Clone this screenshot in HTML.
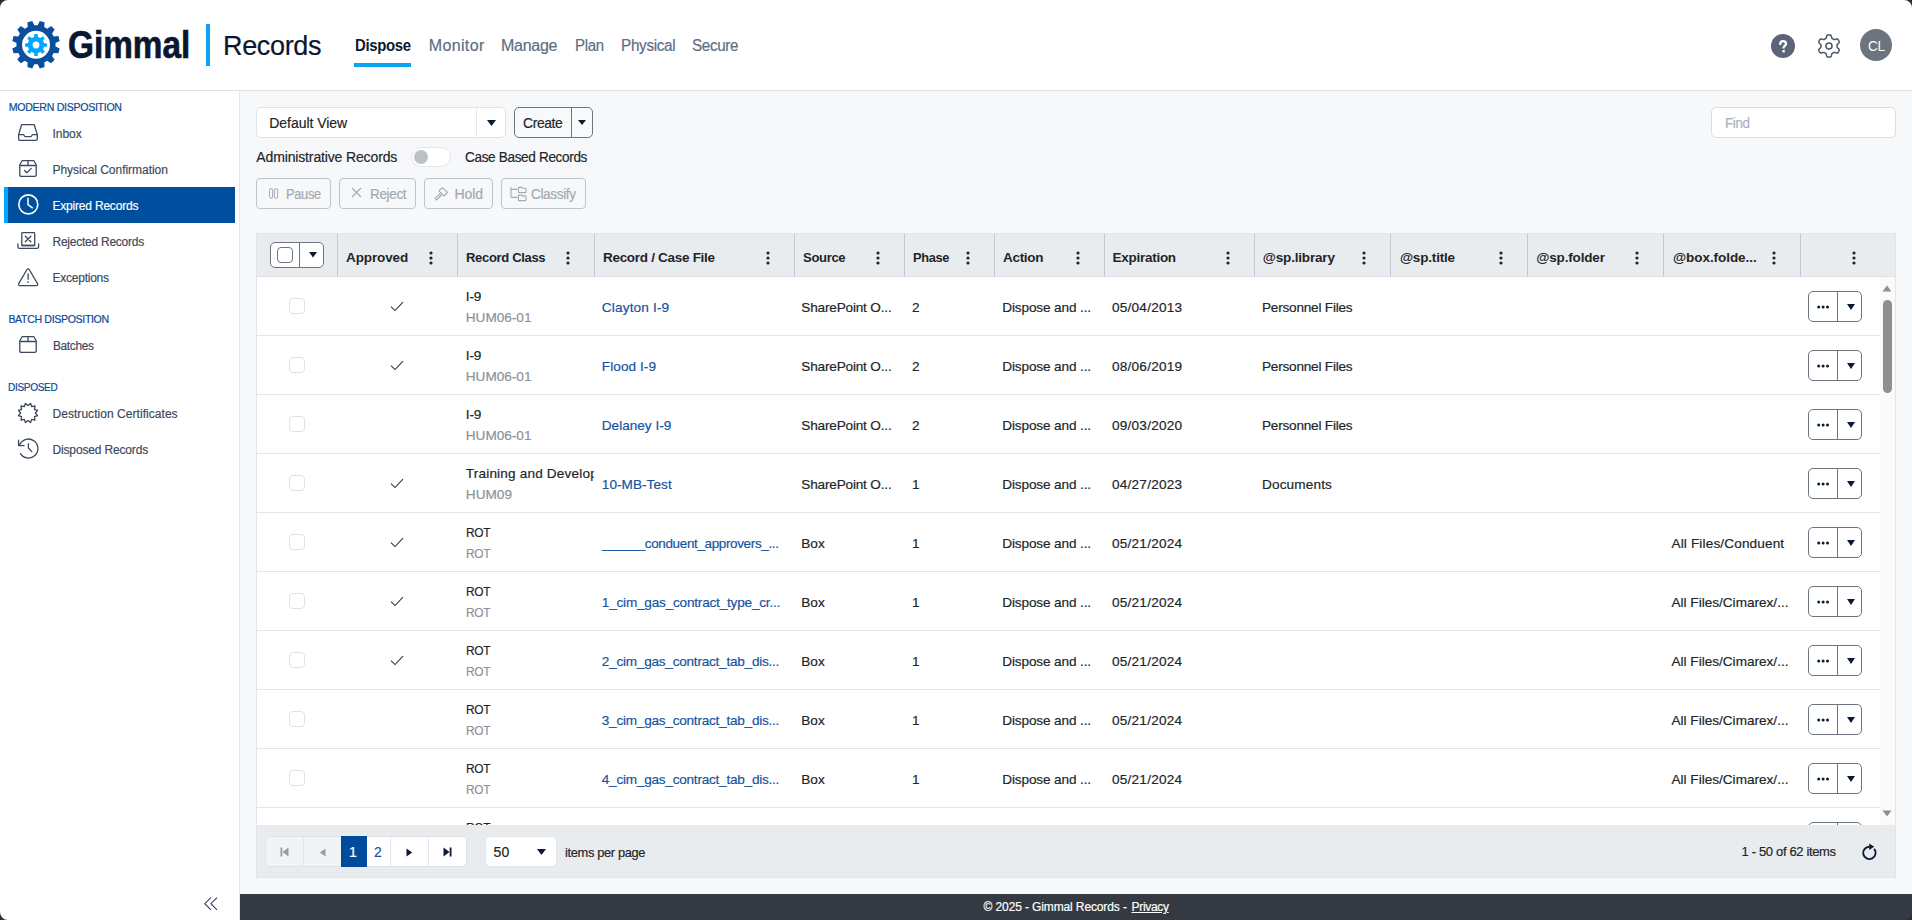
<!DOCTYPE html>
<html><head><meta charset="utf-8"><title>Gimmal Records - Expired Records</title>
<style>
*{box-sizing:border-box;margin:0;padding:0}
html,body{width:1912px;height:920px;overflow:hidden;background:#f7f8fa;font-family:"Liberation Sans",sans-serif;color:#212529}
.t{position:absolute;line-height:1;white-space:nowrap;-webkit-text-stroke:0.18px currentColor}
.b{position:absolute}
svg{position:absolute;overflow:visible}
</style></head><body>

<div class="b" style="left:0px;top:0px;width:1912px;height:90px;background:#fff"></div>
<div class="b" style="left:0px;top:90px;width:1912px;height:1px;background:#dde2e8"></div>
<div class="b" style="left:0px;top:91px;width:239px;height:829px;background:#fff"></div>
<div class="b" style="left:239px;top:91px;width:1px;height:829px;background:#e3e7ec"></div>
<div class="b" style="left:240px;top:894px;width:1672px;height:26px;background:#353a42"></div>
<svg style="left:0;top:0" width="80" height="80" viewBox="0 0 80 80"><path d="M37.71 25.17 L39.75 21.00 L44.60 22.29 L44.28 26.94 L47.24 28.64 L51.10 26.05 L54.65 29.60 L52.06 33.46 L53.76 36.42 L58.41 36.10 L59.70 40.95 L55.53 42.99 L55.53 46.41 L59.70 48.45 L58.41 53.30 L53.76 52.98 L52.06 55.94 L54.65 59.80 L51.10 63.35 L47.24 60.76 L44.28 62.46 L44.60 67.11 L39.75 68.40 L37.71 64.23 L34.29 64.23 L32.25 68.40 L27.40 67.11 L27.72 62.46 L24.76 60.76 L20.90 63.35 L17.35 59.80 L19.94 55.94 L18.24 52.98 L13.59 53.30 L12.30 48.45 L16.47 46.41 L16.47 42.99 L12.30 40.95 L13.59 36.10 L18.24 36.42 L19.94 33.46 L17.35 29.60 L20.90 26.05 L24.76 28.64 L27.72 26.94 L27.40 22.29 L32.25 21.00 L34.29 25.17 Z" fill="#0a4f9f"/><circle cx="36" cy="44.8" r="14" fill="#fff"/><path d="M34.13 36.91 L34.37 34.12 L37.63 34.12 L37.87 36.91 L40.40 37.96 L42.54 36.16 L44.84 38.46 L43.04 40.60 L44.09 43.13 L46.88 43.37 L46.88 46.63 L44.09 46.87 L43.04 49.40 L44.84 51.54 L42.54 53.84 L40.40 52.04 L37.87 53.09 L37.63 55.88 L34.37 55.88 L34.13 53.09 L31.60 52.04 L29.46 53.84 L27.16 51.54 L28.96 49.40 L27.91 46.87 L25.12 46.63 L25.12 43.37 L27.91 43.13 L28.96 40.60 L27.16 38.46 L29.46 36.16 L31.60 37.96 Z" fill="#00a8ff"/><circle cx="36" cy="45" r="3.4" fill="#fff"/></svg>
<div class="t" style="left:67.80px;top:26.11px;font-size:38.50px;color:#0b1631;font-weight:bold;-webkit-text-stroke:0;-webkit-text-stroke:0.7px #0b1631;transform:scaleX(0.8653);transform-origin:0 0">Gimmal</div>
<div class="b" style="left:206px;top:24px;width:4px;height:42px;background:#0aa5f2"></div>
<div class="t" style="left:223.40px;top:32.42px;font-size:27.50px;color:#0b1631;letter-spacing:-0.350px;transform:scaleX(0.9820);transform-origin:0 0;">Records</div>
<div class="t" style="left:355.00px;top:38.06px;font-size:16.00px;color:#0b1a33;font-weight:bold;-webkit-text-stroke:0;letter-spacing:-0.350px;transform:scaleX(0.9328);transform-origin:0 0;">Dispose</div>
<div class="t" style="left:428.70px;top:38.06px;font-size:16.00px;color:#5d6d84;letter-spacing:0.375px;">Monitor</div>
<div class="t" style="left:501.00px;top:38.06px;font-size:16.00px;color:#5d6d84;letter-spacing:-0.264px;">Manage</div>
<div class="t" style="left:574.60px;top:38.06px;font-size:16.00px;color:#5d6d84;letter-spacing:-0.350px;transform:scaleX(0.9363);transform-origin:0 0;">Plan</div>
<div class="t" style="left:620.80px;top:38.06px;font-size:16.00px;color:#5d6d84;letter-spacing:-0.350px;transform:scaleX(0.9575);transform-origin:0 0;">Physical</div>
<div class="t" style="left:692.20px;top:38.06px;font-size:16.00px;color:#5d6d84;letter-spacing:-0.350px;transform:scaleX(0.9500);transform-origin:0 0;">Secure</div>
<div class="b" style="left:354px;top:63px;width:57px;height:4px;background:#0aa5f2"></div>
<svg style="left:1771px;top:34px" width="24" height="24" viewBox="0 0 24 24"><circle cx="12" cy="12" r="12" fill="#5a6577"/><path d="M9.2 10a2.9 2.9 0 0 1 5.8 0c0 1.9-2.4 2-2.4 3.5" fill="none" stroke="#fff" stroke-width="2.2" stroke-linecap="square"/><rect x="11.4" y="16" width="2.4" height="2.4" fill="#fff"/></svg>
<svg style="left:1817.9px;top:34px" width="22" height="24" viewBox="0 0 22 24"><path d="M11.00 0.90 L11.10 0.90 L11.19 0.90 L11.29 0.90 L11.39 0.91 L11.48 0.91 L11.58 0.92 L11.68 0.92 L11.77 0.93 L11.87 0.93 L11.97 0.94 L12.06 0.95 L12.16 0.96 L12.26 0.97 L12.35 0.98 L12.45 1.01 L12.54 1.04 L12.63 1.08 L12.72 1.14 L12.81 1.21 L12.89 1.30 L12.97 1.40 L13.04 1.51 L13.11 1.63 L13.18 1.76 L13.24 1.91 L13.29 2.06 L13.35 2.22 L13.40 2.39 L13.44 2.56 L13.48 2.73 L13.52 2.90 L13.56 3.07 L13.60 3.23 L13.63 3.39 L13.67 3.55 L13.70 3.69 L13.73 3.83 L13.77 3.95 L13.81 4.07 L13.85 4.17 L13.89 4.26 L13.94 4.34 L13.99 4.41 L14.05 4.46 L14.10 4.51 L14.17 4.54 L14.23 4.57 L14.29 4.60 L14.36 4.63 L14.42 4.66 L14.49 4.69 L14.55 4.72 L14.61 4.75 L14.68 4.78 L14.74 4.82 L14.80 4.85 L14.86 4.88 L14.93 4.92 L14.99 4.95 L15.05 4.99 L15.11 5.02 L15.17 5.06 L15.23 5.09 L15.29 5.13 L15.35 5.17 L15.41 5.21 L15.47 5.25 L15.53 5.28 L15.59 5.32 L15.65 5.36 L15.70 5.41 L15.76 5.45 L15.82 5.49 L15.88 5.53 L15.94 5.57 L16.01 5.59 L16.08 5.61 L16.16 5.62 L16.26 5.62 L16.36 5.62 L16.47 5.60 L16.58 5.58 L16.71 5.55 L16.85 5.51 L16.99 5.47 L17.14 5.42 L17.29 5.37 L17.46 5.32 L17.62 5.26 L17.79 5.21 L17.96 5.16 L18.13 5.12 L18.29 5.08 L18.46 5.04 L18.62 5.02 L18.78 5.00 L18.93 4.99 L19.07 4.99 L19.20 5.00 L19.32 5.02 L19.44 5.04 L19.54 5.08 L19.64 5.13 L19.72 5.19 L19.80 5.25 L19.86 5.32 L19.92 5.40 L19.98 5.48 L20.04 5.55 L20.09 5.63 L20.15 5.71 L20.20 5.79 L20.26 5.87 L20.31 5.95 L20.36 6.04 L20.41 6.12 L20.46 6.20 L20.51 6.28 L20.56 6.37 L20.61 6.45 L20.66 6.53 L20.71 6.62 L20.75 6.70 L20.80 6.79 L20.85 6.87 L20.89 6.96 L20.93 7.05 L20.98 7.13 L21.02 7.22 L21.06 7.31 L21.10 7.40 L21.14 7.49 L21.18 7.57 L21.22 7.66 L21.25 7.76 L21.26 7.85 L21.27 7.95 L21.26 8.06 L21.24 8.17 L21.21 8.28 L21.17 8.40 L21.11 8.52 L21.04 8.64 L20.95 8.77 L20.86 8.89 L20.75 9.02 L20.64 9.14 L20.52 9.27 L20.40 9.39 L20.27 9.52 L20.14 9.64 L20.02 9.75 L19.89 9.87 L19.77 9.98 L19.65 10.08 L19.54 10.18 L19.44 10.28 L19.35 10.38 L19.27 10.47 L19.21 10.55 L19.15 10.64 L19.11 10.72 L19.07 10.79 L19.05 10.87 L19.04 10.94 L19.04 11.01 L19.05 11.08 L19.06 11.15 L19.06 11.22 L19.07 11.29 L19.08 11.36 L19.08 11.43 L19.08 11.51 L19.09 11.58 L19.09 11.65 L19.10 11.72 L19.10 11.79 L19.10 11.86 L19.10 11.93 L19.10 12.00 L19.10 12.07 L19.10 12.14 L19.10 12.21 L19.10 12.28 L19.09 12.35 L19.09 12.42 L19.08 12.49 L19.08 12.57 L19.08 12.64 L19.07 12.71 L19.06 12.78 L19.06 12.85 L19.05 12.92 L19.04 12.99 L19.04 13.06 L19.05 13.13 L19.07 13.21 L19.11 13.28 L19.15 13.36 L19.21 13.45 L19.27 13.53 L19.35 13.62 L19.44 13.72 L19.54 13.82 L19.65 13.92 L19.77 14.02 L19.89 14.13 L20.02 14.25 L20.14 14.36 L20.27 14.48 L20.40 14.61 L20.52 14.73 L20.64 14.86 L20.75 14.98 L20.86 15.11 L20.95 15.23 L21.04 15.36 L21.11 15.48 L21.17 15.60 L21.21 15.72 L21.24 15.83 L21.26 15.94 L21.27 16.05 L21.26 16.15 L21.25 16.24 L21.22 16.34 L21.18 16.43 L21.14 16.51 L21.10 16.60 L21.06 16.69 L21.02 16.78 L20.98 16.87 L20.93 16.95 L20.89 17.04 L20.85 17.13 L20.80 17.21 L20.75 17.30 L20.71 17.38 L20.66 17.47 L20.61 17.55 L20.56 17.63 L20.51 17.72 L20.46 17.80 L20.41 17.88 L20.36 17.96 L20.31 18.05 L20.26 18.13 L20.20 18.21 L20.15 18.29 L20.09 18.37 L20.04 18.45 L19.98 18.52 L19.92 18.60 L19.86 18.68 L19.80 18.75 L19.72 18.81 L19.64 18.87 L19.54 18.92 L19.44 18.96 L19.32 18.98 L19.20 19.00 L19.07 19.01 L18.93 19.01 L18.78 19.00 L18.62 18.98 L18.46 18.96 L18.29 18.92 L18.13 18.88 L17.96 18.84 L17.79 18.79 L17.62 18.74 L17.46 18.68 L17.29 18.63 L17.14 18.58 L16.99 18.53 L16.85 18.49 L16.71 18.45 L16.58 18.42 L16.47 18.40 L16.36 18.38 L16.26 18.38 L16.16 18.38 L16.08 18.39 L16.01 18.41 L15.94 18.43 L15.88 18.47 L15.82 18.51 L15.76 18.55 L15.70 18.59 L15.65 18.64 L15.59 18.68 L15.53 18.72 L15.47 18.75 L15.41 18.79 L15.35 18.83 L15.29 18.87 L15.23 18.91 L15.17 18.94 L15.11 18.98 L15.05 19.01 L14.99 19.05 L14.93 19.08 L14.86 19.12 L14.80 19.15 L14.74 19.18 L14.68 19.22 L14.61 19.25 L14.55 19.28 L14.49 19.31 L14.42 19.34 L14.36 19.37 L14.29 19.40 L14.23 19.43 L14.17 19.46 L14.10 19.49 L14.05 19.54 L13.99 19.59 L13.94 19.66 L13.89 19.74 L13.85 19.83 L13.81 19.93 L13.77 20.05 L13.73 20.17 L13.70 20.31 L13.67 20.45 L13.63 20.61 L13.60 20.77 L13.56 20.93 L13.52 21.10 L13.48 21.27 L13.44 21.44 L13.40 21.61 L13.35 21.78 L13.29 21.94 L13.24 22.09 L13.18 22.24 L13.11 22.37 L13.04 22.49 L12.97 22.60 L12.89 22.70 L12.81 22.79 L12.72 22.86 L12.63 22.92 L12.54 22.96 L12.45 22.99 L12.35 23.02 L12.26 23.03 L12.16 23.04 L12.06 23.05 L11.97 23.06 L11.87 23.07 L11.77 23.07 L11.68 23.08 L11.58 23.08 L11.48 23.09 L11.39 23.09 L11.29 23.10 L11.19 23.10 L11.10 23.10 L11.00 23.10 L10.90 23.10 L10.81 23.10 L10.71 23.10 L10.61 23.09 L10.52 23.09 L10.42 23.08 L10.32 23.08 L10.23 23.07 L10.13 23.07 L10.03 23.06 L9.94 23.05 L9.84 23.04 L9.74 23.03 L9.65 23.02 L9.55 22.99 L9.46 22.96 L9.37 22.92 L9.28 22.86 L9.19 22.79 L9.11 22.70 L9.03 22.60 L8.96 22.49 L8.89 22.37 L8.82 22.24 L8.76 22.09 L8.71 21.94 L8.65 21.78 L8.60 21.61 L8.56 21.44 L8.52 21.27 L8.48 21.10 L8.44 20.93 L8.40 20.77 L8.37 20.61 L8.33 20.45 L8.30 20.31 L8.27 20.17 L8.23 20.05 L8.19 19.93 L8.15 19.83 L8.11 19.74 L8.06 19.66 L8.01 19.59 L7.95 19.54 L7.90 19.49 L7.83 19.46 L7.77 19.43 L7.71 19.40 L7.64 19.37 L7.58 19.34 L7.51 19.31 L7.45 19.28 L7.39 19.25 L7.32 19.22 L7.26 19.18 L7.20 19.15 L7.14 19.12 L7.07 19.08 L7.01 19.05 L6.95 19.01 L6.89 18.98 L6.83 18.94 L6.77 18.91 L6.71 18.87 L6.65 18.83 L6.59 18.79 L6.53 18.75 L6.47 18.72 L6.41 18.68 L6.35 18.64 L6.30 18.59 L6.24 18.55 L6.18 18.51 L6.12 18.47 L6.06 18.43 L5.99 18.41 L5.92 18.39 L5.84 18.38 L5.74 18.38 L5.64 18.38 L5.53 18.40 L5.42 18.42 L5.29 18.45 L5.15 18.49 L5.01 18.53 L4.86 18.58 L4.71 18.63 L4.54 18.68 L4.38 18.74 L4.21 18.79 L4.04 18.84 L3.87 18.88 L3.71 18.92 L3.54 18.96 L3.38 18.98 L3.22 19.00 L3.07 19.01 L2.93 19.01 L2.80 19.00 L2.68 18.98 L2.56 18.96 L2.46 18.92 L2.36 18.87 L2.28 18.81 L2.20 18.75 L2.14 18.68 L2.08 18.60 L2.02 18.52 L1.96 18.45 L1.91 18.37 L1.85 18.29 L1.80 18.21 L1.74 18.13 L1.69 18.05 L1.64 17.96 L1.59 17.88 L1.54 17.80 L1.49 17.72 L1.44 17.63 L1.39 17.55 L1.34 17.47 L1.29 17.38 L1.25 17.30 L1.20 17.21 L1.15 17.13 L1.11 17.04 L1.07 16.95 L1.02 16.87 L0.98 16.78 L0.94 16.69 L0.90 16.60 L0.86 16.51 L0.82 16.43 L0.78 16.34 L0.75 16.24 L0.74 16.15 L0.73 16.05 L0.74 15.94 L0.76 15.83 L0.79 15.72 L0.83 15.60 L0.89 15.48 L0.96 15.36 L1.05 15.23 L1.14 15.11 L1.25 14.98 L1.36 14.86 L1.48 14.73 L1.60 14.61 L1.73 14.48 L1.86 14.36 L1.98 14.25 L2.11 14.13 L2.23 14.02 L2.35 13.92 L2.46 13.82 L2.56 13.72 L2.65 13.62 L2.73 13.53 L2.79 13.45 L2.85 13.36 L2.89 13.28 L2.93 13.21 L2.95 13.13 L2.96 13.06 L2.96 12.99 L2.95 12.92 L2.94 12.85 L2.94 12.78 L2.93 12.71 L2.92 12.64 L2.92 12.57 L2.92 12.49 L2.91 12.42 L2.91 12.35 L2.90 12.28 L2.90 12.21 L2.90 12.14 L2.90 12.07 L2.90 12.00 L2.90 11.93 L2.90 11.86 L2.90 11.79 L2.90 11.72 L2.91 11.65 L2.91 11.58 L2.92 11.51 L2.92 11.43 L2.92 11.36 L2.93 11.29 L2.94 11.22 L2.94 11.15 L2.95 11.08 L2.96 11.01 L2.96 10.94 L2.95 10.87 L2.93 10.79 L2.89 10.72 L2.85 10.64 L2.79 10.55 L2.73 10.47 L2.65 10.38 L2.56 10.28 L2.46 10.18 L2.35 10.08 L2.23 9.98 L2.11 9.87 L1.98 9.75 L1.86 9.64 L1.73 9.52 L1.60 9.39 L1.48 9.27 L1.36 9.14 L1.25 9.02 L1.14 8.89 L1.05 8.77 L0.96 8.64 L0.89 8.52 L0.83 8.40 L0.79 8.28 L0.76 8.17 L0.74 8.06 L0.73 7.95 L0.74 7.85 L0.75 7.76 L0.78 7.66 L0.82 7.57 L0.86 7.49 L0.90 7.40 L0.94 7.31 L0.98 7.22 L1.02 7.13 L1.07 7.05 L1.11 6.96 L1.15 6.87 L1.20 6.79 L1.25 6.70 L1.29 6.62 L1.34 6.53 L1.39 6.45 L1.44 6.37 L1.49 6.28 L1.54 6.20 L1.59 6.12 L1.64 6.04 L1.69 5.95 L1.74 5.87 L1.80 5.79 L1.85 5.71 L1.91 5.63 L1.96 5.55 L2.02 5.48 L2.08 5.40 L2.14 5.32 L2.20 5.25 L2.28 5.19 L2.36 5.13 L2.46 5.08 L2.56 5.04 L2.68 5.02 L2.80 5.00 L2.93 4.99 L3.07 4.99 L3.22 5.00 L3.38 5.02 L3.54 5.04 L3.71 5.08 L3.87 5.12 L4.04 5.16 L4.21 5.21 L4.38 5.26 L4.54 5.32 L4.71 5.37 L4.86 5.42 L5.01 5.47 L5.15 5.51 L5.29 5.55 L5.42 5.58 L5.53 5.60 L5.64 5.62 L5.74 5.62 L5.84 5.62 L5.92 5.61 L5.99 5.59 L6.06 5.57 L6.12 5.53 L6.18 5.49 L6.24 5.45 L6.30 5.41 L6.35 5.36 L6.41 5.32 L6.47 5.28 L6.53 5.25 L6.59 5.21 L6.65 5.17 L6.71 5.13 L6.77 5.09 L6.83 5.06 L6.89 5.02 L6.95 4.99 L7.01 4.95 L7.07 4.92 L7.14 4.88 L7.20 4.85 L7.26 4.82 L7.32 4.78 L7.39 4.75 L7.45 4.72 L7.51 4.69 L7.58 4.66 L7.64 4.63 L7.71 4.60 L7.77 4.57 L7.83 4.54 L7.90 4.51 L7.95 4.46 L8.01 4.41 L8.06 4.34 L8.11 4.26 L8.15 4.17 L8.19 4.07 L8.23 3.95 L8.27 3.83 L8.30 3.69 L8.33 3.55 L8.37 3.39 L8.40 3.23 L8.44 3.07 L8.48 2.90 L8.52 2.73 L8.56 2.56 L8.60 2.39 L8.65 2.22 L8.71 2.06 L8.76 1.91 L8.82 1.76 L8.89 1.63 L8.96 1.51 L9.03 1.40 L9.11 1.30 L9.19 1.21 L9.28 1.14 L9.37 1.08 L9.46 1.04 L9.55 1.01 L9.65 0.98 L9.74 0.97 L9.84 0.96 L9.94 0.95 L10.03 0.94 L10.13 0.93 L10.23 0.93 L10.32 0.92 L10.42 0.92 L10.52 0.91 L10.61 0.91 L10.71 0.90 L10.81 0.90 L10.90 0.90Z" fill="none" stroke="#4a5568" stroke-width="1.5" stroke-linejoin="round"/><circle cx="11" cy="12" r="3.05" fill="none" stroke="#4a5568" stroke-width="1.5"/></svg>
<div class="b" style="left:1860px;top:29px;width:32px;height:32px;background:#6c757e;border-radius:50%"></div>
<div class="t" style="left:1867.80px;top:38.20px;font-size:15.00px;color:#fff;letter-spacing:-0.350px;transform:scaleX(0.9084);transform-origin:0 0;-webkit-text-stroke:0">CL</div>
<div class="t" style="left:8.70px;top:101.83px;font-size:10.60px;color:#0b4896;letter-spacing:-0.293px;">MODERN DISPOSITION</div>
<div class="t" style="left:8.40px;top:313.93px;font-size:10.60px;color:#0b4896;letter-spacing:-0.350px;">BATCH DISPOSITION</div>
<div class="t" style="left:8.40px;top:381.73px;font-size:10.60px;color:#0b4896;letter-spacing:-0.350px;transform:scaleX(0.9497);transform-origin:0 0;">DISPOSED</div>
<div class="b" style="left:4px;top:187px;width:231px;height:36px;background:#004e9e"></div>
<div class="b" style="left:4px;top:187px;width:4px;height:36px;background:#00a6ff"></div>
<div class="t" style="left:52.50px;top:127.54px;font-size:12.00px;color:#3d4a5d;letter-spacing:-0.039px;">Inbox</div>
<div class="t" style="left:52.50px;top:163.54px;font-size:12.00px;color:#3d4a5d;letter-spacing:-0.032px;">Physical Confirmation</div>
<div class="t" style="left:52.50px;top:199.54px;font-size:12.00px;color:#fff;letter-spacing:-0.200px;">Expired Records</div>
<div class="t" style="left:52.50px;top:235.64px;font-size:12.00px;color:#3d4a5d;letter-spacing:-0.245px;">Rejected Records</div>
<div class="t" style="left:52.50px;top:272.04px;font-size:12.00px;color:#3d4a5d;letter-spacing:-0.244px;">Exceptions</div>
<div class="t" style="left:52.50px;top:339.54px;font-size:12.00px;color:#3d4a5d;letter-spacing:-0.350px;transform:scaleX(0.9913);transform-origin:0 0;">Batches</div>
<div class="t" style="left:52.50px;top:408.04px;font-size:12.00px;color:#3d4a5d;letter-spacing:0.046px;">Destruction Certificates</div>
<div class="t" style="left:52.50px;top:443.84px;font-size:12.00px;color:#3d4a5d;letter-spacing:-0.156px;">Disposed Records</div>
<svg style="left:18px;top:124px" width="20" height="17" viewBox="0 0 20 17"><path d="M3.6 0.7h12.6l3.1 9.9v4.4a1.4 1.4 0 0 1-1.4 1.4H2a1.4 1.4 0 0 1-1.4-1.4V10.6z M0.6 10.6H5q0.8 0 1.1 0.7l0.4 0.7q0.3 0.6 1 0.6h5q0.7 0 1-0.6l0.4-0.7q0.3-0.7 1.1-0.7H19.3" fill="none" stroke="#3d4a5d" stroke-width="1.3" stroke-linecap="round" stroke-linejoin="round"/></svg>
<svg style="left:19px;top:160px" width="18" height="17" viewBox="0 0 18 17"><path d="M3 0.7h12l2.2 4v10.3a1.3 1.3 0 0 1-1.3 1.3H2.1A1.3 1.3 0 0 1 0.8 15V4.7z M0.8 5.5h16.4 M9 0.7v4.8 M5.5 10.5l2.3 2.2 4.5-4.3" fill="none" stroke="#3d4a5d" stroke-width="1.3" stroke-linecap="round" stroke-linejoin="round"/></svg>
<svg style="left:18px;top:194px" width="21" height="21" viewBox="0 0 21 21"><circle cx="10.3" cy="10.4" r="9.5" fill="none" stroke="#fff" stroke-width="1.6"/><path d="M10 4.2v6.4l4.4 3.2" fill="none" stroke="#fff" stroke-width="1.5" stroke-linecap="round"/></svg>
<svg style="left:17px;top:232px" width="23" height="18" viewBox="0 0 23 18"><path d="M4.8 13.4V1.4a0.7 0.7 0 0 1 0.7-0.7h11.5a0.7 0.7 0 0 1 0.7 0.7v12 M8.3 4.2l5.6 5.6 M13.9 4.2l-5.6 5.6 M0.9 11.9v2.9a1.6 1.6 0 0 0 1.6 1.6h17.5a1.6 1.6 0 0 0 1.6-1.6v-2.9" fill="none" stroke="#3d4a5d" stroke-width="1.3" stroke-linecap="round" stroke-linejoin="round"/><path d="M4.8 13.5h12.9" stroke="#3d4a5d" stroke-width="1.8"/></svg>
<svg style="left:17.8px;top:267.5px" width="21" height="18" viewBox="0 0 21 18"><path d="M9 1.5a1.3 1.3 0 0 1 2.2 0l8.3 14.2a1.3 1.3 0 0 1-1.1 2H1.8a1.3 1.3 0 0 1-1.1-2z M10.1 6v5.3" fill="none" stroke="#3d4a5d" stroke-width="1.3" stroke-linecap="round" stroke-linejoin="round"/><circle cx="10.1" cy="14" r="0.85" fill="#3d4a5d"/></svg>
<svg style="left:19px;top:336px" width="18" height="17" viewBox="0 0 18 17"><path d="M3 0.7h12l2.2 4v10.3a1.3 1.3 0 0 1-1.3 1.3H2.1A1.3 1.3 0 0 1 0.8 15V4.7z M0.8 5.5h16.4 M9 0.7v4.8" fill="none" stroke="#3d4a5d" stroke-width="1.3" stroke-linecap="round" stroke-linejoin="round"/></svg>
<svg style="left:18px;top:402.5px" width="20" height="20" viewBox="0 0 20 20"><path d="M12.56 0.44 L13.70 3.59 L17.00 3.00 L16.41 6.30 L19.56 7.44 L17.40 10.00 L19.56 12.56 L16.41 13.70 L17.00 17.00 L13.70 16.41 L12.56 19.56 L10.00 17.40 L7.44 19.56 L6.30 16.41 L3.00 17.00 L3.59 13.70 L0.44 12.56 L2.60 10.00 L0.44 7.44 L3.59 6.30 L3.00 3.00 L6.30 3.59 L7.44 0.44 L10.00 2.60Z" fill="none" stroke="#3d4a5d" stroke-width="1.3" stroke-linecap="round" stroke-linejoin="round"/></svg>
<svg style="left:18px;top:439px" width="22" height="21" viewBox="0 0 22 21"><path d="M1.9 5.4A9.5 9.5 0 1 1 2.4 14.6 M0.6 1.2v5.5h5.5 M10.4 4.7v4.3l3.4 3.6" fill="none" stroke="#3d4a5d" stroke-width="1.3" stroke-linecap="round" stroke-linejoin="round"/></svg>
<svg style="left:204px;top:897px" width="14" height="14" viewBox="0 0 14 14"><path d="M6.9 0.6L0.8 6.7l6.1 6.1 M13 0.6L6.9 6.7l6.1 6.1" fill="none" stroke="#33395a" stroke-width="1.05"/></svg>
<div class="b" style="left:256px;top:107px;width:250px;height:31px;background:#fff;border:1px solid #dfe3e8;border-radius:5px"></div>
<div class="b" style="left:476px;top:108px;width:1px;height:29px;background:#e6e9ed"></div>
<svg style="left:487px;top:120px" width="9" height="6" viewBox="0 0 9 6"><path d="M0 0h9L4.5 6z" fill="#0b1a33"/></svg>
<div class="t" style="left:269.30px;top:116.15px;font-size:14.00px;color:#212529;letter-spacing:-0.049px;">Default View</div>
<div class="b" style="left:514px;top:107px;width:79px;height:31px;background:#f8f9fa;border:1px solid #6c757d;border-radius:5px"></div>
<div class="b" style="left:571px;top:108px;width:1px;height:29px;background:#6c757d"></div>
<svg style="left:577.5px;top:119.5px" width="8" height="5" viewBox="0 0 8 5"><path d="M0 0h8L4 5z" fill="#0b1a33"/></svg>
<div class="t" style="left:523.00px;top:116.15px;font-size:14.00px;color:#212529;letter-spacing:-0.350px;transform:scaleX(0.9883);transform-origin:0 0;">Create</div>
<div class="t" style="left:256.30px;top:149.85px;font-size:14.00px;color:#212529;letter-spacing:-0.140px;">Administrative Records</div>
<div class="t" style="left:464.90px;top:149.85px;font-size:14.00px;color:#212529;letter-spacing:-0.350px;transform:scaleX(0.9688);transform-origin:0 0;">Case Based Records</div>
<div class="b" style="left:411px;top:147px;width:40px;height:20px;background:#fff;border:1px solid #e3e6ea;border-radius:10px"></div>
<div class="b" style="left:414px;top:150px;width:14px;height:14px;background:#bcc0c7;border-radius:50%"></div>
<div class="b" style="left:256px;top:178px;width:75px;height:31px;border:1px solid #bfc4ca;border-radius:4px"></div>
<div class="b" style="left:339px;top:178px;width:77px;height:31px;border:1px solid #bfc4ca;border-radius:4px"></div>
<div class="b" style="left:424px;top:178px;width:69px;height:31px;border:1px solid #bfc4ca;border-radius:4px"></div>
<div class="b" style="left:501px;top:178px;width:85px;height:31px;border:1px solid #bfc4ca;border-radius:4px"></div>
<svg style="left:268px;top:186px" width="12" height="15" viewBox="0 0 12 15"><rect x="1.6" y="2.6" width="3" height="9.7" rx="1.5" fill="none" stroke="#a2a9b0" stroke-width="1"/><rect x="6.4" y="2.6" width="3.3" height="9.7" rx="1.6" fill="none" stroke="#a2a9b0" stroke-width="1"/></svg>
<div class="t" style="left:286.40px;top:187.15px;font-size:14.00px;color:#a2a9b0;letter-spacing:-0.350px;transform:scaleX(0.9191);transform-origin:0 0;">Pause</div>
<svg style="left:351px;top:187px" width="11" height="11" viewBox="0 0 11 11"><path d="M1 1l9 9M10 1l-9 9" fill="none" stroke="#a2a9b0" stroke-width="1.2"/></svg>
<div class="t" style="left:369.70px;top:187.15px;font-size:14.00px;color:#a2a9b0;letter-spacing:-0.350px;transform:scaleX(0.9649);transform-origin:0 0;">Reject</div>
<svg style="left:434px;top:186px" width="16" height="16" viewBox="0 0 16 16"><path d="M8.3 1.6L13.5 6.4 10 10 4.9 4.9z M7 9.5L5.5 8.1 1 12.4 2.6 14z" fill="none" stroke="#a2a9b0" stroke-width="1.1" stroke-linejoin="round"/></svg>
<div class="t" style="left:454.40px;top:187.15px;font-size:14.00px;color:#a2a9b0;letter-spacing:-0.031px;">Hold</div>
<svg style="left:510px;top:186px" width="17" height="16" viewBox="0 0 17 16"><path d="M1 1v9.6a0.8 0.8 0 0 0 0.8 0.8H7.3 M1 3.4h6.3" fill="none" stroke="#a2a9b0" stroke-width="1.1"/><path d="M9 1.4h2.6l0.8 0.8h3a0.6 0.6 0 0 1 0.6 0.6v3.2a0.6 0.6 0 0 1-0.6 0.6H9a0.6 0.6 0 0 1-0.6-0.6V2a0.6 0.6 0 0 1 0.6-0.6z M9 9.1h2.6l0.8 0.8h3a0.6 0.6 0 0 1 0.6 0.6v3.5a0.6 0.6 0 0 1-0.6 0.6H9a0.6 0.6 0 0 1-0.6-0.6V9.7a0.6 0.6 0 0 1 0.6-0.6z" fill="none" stroke="#a2a9b0" stroke-width="1.1"/></svg>
<div class="t" style="left:531.40px;top:187.15px;font-size:14.00px;color:#a2a9b0;letter-spacing:-0.350px;transform:scaleX(0.9666);transform-origin:0 0;">Classify</div>
<div class="b" style="left:1711px;top:107px;width:185px;height:31px;background:#fff;border:1px solid #dadfe5;border-radius:5px"></div>
<div class="t" style="left:1724.50px;top:116.35px;font-size:14.00px;color:#a9b1bb;letter-spacing:-0.350px;transform:scaleX(0.9548);transform-origin:0 0;">Find</div>
<div class="b" style="left:256px;top:233px;width:1640px;height:593px;background:#fff;border:1px solid #e1e5ea"></div>
<div class="b" style="left:257px;top:234px;width:1638px;height:43px;background:#e9ecef"></div>
<div class="b" style="left:257px;top:276px;width:1638px;height:1px;background:#dee2e6"></div>
<div class="b" style="left:337px;top:234px;width:1px;height:43px;background:#c3c9d0"></div>
<div class="b" style="left:457px;top:234px;width:1px;height:43px;background:#c3c9d0"></div>
<div class="b" style="left:594px;top:234px;width:1px;height:43px;background:#c3c9d0"></div>
<div class="b" style="left:794px;top:234px;width:1px;height:43px;background:#c3c9d0"></div>
<div class="b" style="left:904px;top:234px;width:1px;height:43px;background:#c3c9d0"></div>
<div class="b" style="left:994px;top:234px;width:1px;height:43px;background:#c3c9d0"></div>
<div class="b" style="left:1104px;top:234px;width:1px;height:43px;background:#c3c9d0"></div>
<div class="b" style="left:1254px;top:234px;width:1px;height:43px;background:#c3c9d0"></div>
<div class="b" style="left:1390px;top:234px;width:1px;height:43px;background:#c3c9d0"></div>
<div class="b" style="left:1527px;top:234px;width:1px;height:43px;background:#c3c9d0"></div>
<div class="b" style="left:1663px;top:234px;width:1px;height:43px;background:#c3c9d0"></div>
<div class="b" style="left:1800px;top:234px;width:1px;height:43px;background:#c3c9d0"></div>
<div class="b" style="left:270px;top:242px;width:54px;height:26px;background:#fff;border:1px solid #6c757d;border-radius:5px"></div>
<div class="b" style="left:299px;top:243px;width:1px;height:24px;background:#6c757d"></div>
<div class="b" style="left:277px;top:247px;width:16px;height:16px;border:1px solid #6c757d;border-radius:4px"></div>
<svg style="left:309px;top:252px" width="8" height="6" viewBox="0 0 8 6"><path d="M0 0h8L4 5.5z" fill="#0b1a33"/></svg>
<div class="t" style="left:346.00px;top:251.37px;font-size:13.50px;color:#212529;font-weight:bold;-webkit-text-stroke:0;letter-spacing:-0.115px;">Approved</div>
<div class="t" style="left:466.20px;top:251.37px;font-size:13.50px;color:#212529;font-weight:bold;-webkit-text-stroke:0;letter-spacing:-0.350px;transform:scaleX(0.9656);transform-origin:0 0;">Record Class</div>
<div class="t" style="left:603.00px;top:251.37px;font-size:13.50px;color:#212529;font-weight:bold;-webkit-text-stroke:0;letter-spacing:-0.297px;">Record / Case File</div>
<div class="t" style="left:802.60px;top:251.37px;font-size:13.50px;color:#212529;font-weight:bold;-webkit-text-stroke:0;letter-spacing:-0.350px;transform:scaleX(0.9678);transform-origin:0 0;">Source</div>
<div class="t" style="left:913.30px;top:251.37px;font-size:13.50px;color:#212529;font-weight:bold;-webkit-text-stroke:0;letter-spacing:-0.350px;transform:scaleX(0.9485);transform-origin:0 0;">Phase</div>
<div class="t" style="left:1002.90px;top:251.37px;font-size:13.50px;color:#212529;font-weight:bold;-webkit-text-stroke:0;letter-spacing:-0.259px;">Action</div>
<div class="t" style="left:1112.60px;top:251.37px;font-size:13.50px;color:#212529;font-weight:bold;-webkit-text-stroke:0;letter-spacing:-0.279px;">Expiration</div>
<div class="t" style="left:1262.80px;top:251.37px;font-size:13.50px;color:#212529;font-weight:bold;-webkit-text-stroke:0;letter-spacing:-0.184px;">@sp.library</div>
<div class="t" style="left:1399.90px;top:251.37px;font-size:13.50px;color:#212529;font-weight:bold;-webkit-text-stroke:0;letter-spacing:-0.184px;">@sp.title</div>
<div class="t" style="left:1536.30px;top:251.37px;font-size:13.50px;color:#212529;font-weight:bold;-webkit-text-stroke:0;letter-spacing:-0.174px;">@sp.folder</div>
<div class="t" style="left:1673.00px;top:251.37px;font-size:13.50px;color:#212529;font-weight:bold;-webkit-text-stroke:0;letter-spacing:-0.060px;">@box.folde...</div>
<svg style="left:428.5px;top:251px" width="4" height="14" viewBox="0 0 4 14"><circle cx="2" cy="2" r="1.6" fill="#212529"/><circle cx="2" cy="7" r="1.6" fill="#212529"/><circle cx="2" cy="12" r="1.6" fill="#212529"/></svg>
<svg style="left:565.5px;top:251px" width="4" height="14" viewBox="0 0 4 14"><circle cx="2" cy="2" r="1.6" fill="#212529"/><circle cx="2" cy="7" r="1.6" fill="#212529"/><circle cx="2" cy="12" r="1.6" fill="#212529"/></svg>
<svg style="left:765.5px;top:251px" width="4" height="14" viewBox="0 0 4 14"><circle cx="2" cy="2" r="1.6" fill="#212529"/><circle cx="2" cy="7" r="1.6" fill="#212529"/><circle cx="2" cy="12" r="1.6" fill="#212529"/></svg>
<svg style="left:875.5px;top:251px" width="4" height="14" viewBox="0 0 4 14"><circle cx="2" cy="2" r="1.6" fill="#212529"/><circle cx="2" cy="7" r="1.6" fill="#212529"/><circle cx="2" cy="12" r="1.6" fill="#212529"/></svg>
<svg style="left:965.5px;top:251px" width="4" height="14" viewBox="0 0 4 14"><circle cx="2" cy="2" r="1.6" fill="#212529"/><circle cx="2" cy="7" r="1.6" fill="#212529"/><circle cx="2" cy="12" r="1.6" fill="#212529"/></svg>
<svg style="left:1075.5px;top:251px" width="4" height="14" viewBox="0 0 4 14"><circle cx="2" cy="2" r="1.6" fill="#212529"/><circle cx="2" cy="7" r="1.6" fill="#212529"/><circle cx="2" cy="12" r="1.6" fill="#212529"/></svg>
<svg style="left:1225.5px;top:251px" width="4" height="14" viewBox="0 0 4 14"><circle cx="2" cy="2" r="1.6" fill="#212529"/><circle cx="2" cy="7" r="1.6" fill="#212529"/><circle cx="2" cy="12" r="1.6" fill="#212529"/></svg>
<svg style="left:1361.5px;top:251px" width="4" height="14" viewBox="0 0 4 14"><circle cx="2" cy="2" r="1.6" fill="#212529"/><circle cx="2" cy="7" r="1.6" fill="#212529"/><circle cx="2" cy="12" r="1.6" fill="#212529"/></svg>
<svg style="left:1498.5px;top:251px" width="4" height="14" viewBox="0 0 4 14"><circle cx="2" cy="2" r="1.6" fill="#212529"/><circle cx="2" cy="7" r="1.6" fill="#212529"/><circle cx="2" cy="12" r="1.6" fill="#212529"/></svg>
<svg style="left:1634.5px;top:251px" width="4" height="14" viewBox="0 0 4 14"><circle cx="2" cy="2" r="1.6" fill="#212529"/><circle cx="2" cy="7" r="1.6" fill="#212529"/><circle cx="2" cy="12" r="1.6" fill="#212529"/></svg>
<svg style="left:1771.5px;top:251px" width="4" height="14" viewBox="0 0 4 14"><circle cx="2" cy="2" r="1.6" fill="#212529"/><circle cx="2" cy="7" r="1.6" fill="#212529"/><circle cx="2" cy="12" r="1.6" fill="#212529"/></svg>
<svg style="left:1851.5px;top:251px" width="4" height="14" viewBox="0 0 4 14"><circle cx="2" cy="2" r="1.6" fill="#212529"/><circle cx="2" cy="7" r="1.6" fill="#212529"/><circle cx="2" cy="12" r="1.6" fill="#212529"/></svg>
<div class="b" style="left:257px;top:335px;width:1623px;height:1px;background:#e3e7eb"></div>
<div class="b" style="left:289px;top:298px;width:16px;height:16px;border:1px solid #dee2e6;border-radius:4px"></div>
<svg style="left:390px;top:301px" width="14" height="11" viewBox="0 0 14 11"><path d="M1 5.6l4 4 8-8.4" fill="none" stroke="#2f353b" stroke-width="1.05"/></svg>
<div class="t" style="left:465.80px;top:289.69px;font-size:13.60px;color:#212529;letter-spacing:-0.136px;">I-9</div>
<div class="t" style="left:465.80px;top:310.69px;font-size:13.60px;color:#8b9299;letter-spacing:-0.008px;">HUM06-01</div>
<div class="t" style="left:601.80px;top:300.79px;font-size:13.60px;color:#1553a0;letter-spacing:0.164px;">Clayton I-9</div>
<div class="t" style="left:801.30px;top:300.79px;font-size:13.60px;color:#212529;letter-spacing:-0.184px;">SharePoint O...</div>
<div class="t" style="left:912.00px;top:300.79px;font-size:13.60px;color:#212529;">2</div>
<div class="t" style="left:1002.20px;top:300.79px;font-size:13.60px;color:#212529;letter-spacing:-0.123px;">Dispose and ...</div>
<div class="t" style="left:1111.90px;top:300.79px;font-size:13.60px;color:#212529;letter-spacing:0.248px;">05/04/2013</div>
<div class="t" style="left:1262.00px;top:300.79px;font-size:13.60px;color:#212529;letter-spacing:-0.217px;">Personnel Files</div>
<div class="b" style="left:1808px;top:291px;width:54px;height:31px;background:#fff;border:1px solid #6c757d;border-radius:5px"></div>
<div class="b" style="left:1837px;top:292px;width:1px;height:29px;background:#6c757d"></div>
<svg style="left:1817px;top:304.5px" width="12" height="4" viewBox="0 0 12 4"><circle cx="1.7" cy="2" r="1.5" fill="#0b1a33"/><circle cx="6.1" cy="2" r="1.5" fill="#0b1a33"/><circle cx="10.5" cy="2" r="1.5" fill="#0b1a33"/></svg>
<svg style="left:1846.5px;top:303.5px" width="8" height="6" viewBox="0 0 8 6"><path d="M0 0h8L4 6z" fill="#0b1a33"/></svg>
<div class="b" style="left:257px;top:394px;width:1623px;height:1px;background:#e3e7eb"></div>
<div class="b" style="left:289px;top:357px;width:16px;height:16px;border:1px solid #dee2e6;border-radius:4px"></div>
<svg style="left:390px;top:360px" width="14" height="11" viewBox="0 0 14 11"><path d="M1 5.6l4 4 8-8.4" fill="none" stroke="#2f353b" stroke-width="1.05"/></svg>
<div class="t" style="left:465.80px;top:348.69px;font-size:13.60px;color:#212529;letter-spacing:-0.136px;">I-9</div>
<div class="t" style="left:465.80px;top:369.69px;font-size:13.60px;color:#8b9299;letter-spacing:-0.008px;">HUM06-01</div>
<div class="t" style="left:601.80px;top:359.79px;font-size:13.60px;color:#1553a0;letter-spacing:0.066px;">Flood I-9</div>
<div class="t" style="left:801.30px;top:359.79px;font-size:13.60px;color:#212529;letter-spacing:-0.184px;">SharePoint O...</div>
<div class="t" style="left:912.00px;top:359.79px;font-size:13.60px;color:#212529;">2</div>
<div class="t" style="left:1002.20px;top:359.79px;font-size:13.60px;color:#212529;letter-spacing:-0.123px;">Dispose and ...</div>
<div class="t" style="left:1111.90px;top:359.79px;font-size:13.60px;color:#212529;letter-spacing:0.248px;">08/06/2019</div>
<div class="t" style="left:1262.00px;top:359.79px;font-size:13.60px;color:#212529;letter-spacing:-0.217px;">Personnel Files</div>
<div class="b" style="left:1808px;top:350px;width:54px;height:31px;background:#fff;border:1px solid #6c757d;border-radius:5px"></div>
<div class="b" style="left:1837px;top:351px;width:1px;height:29px;background:#6c757d"></div>
<svg style="left:1817px;top:363.5px" width="12" height="4" viewBox="0 0 12 4"><circle cx="1.7" cy="2" r="1.5" fill="#0b1a33"/><circle cx="6.1" cy="2" r="1.5" fill="#0b1a33"/><circle cx="10.5" cy="2" r="1.5" fill="#0b1a33"/></svg>
<svg style="left:1846.5px;top:362.5px" width="8" height="6" viewBox="0 0 8 6"><path d="M0 0h8L4 6z" fill="#0b1a33"/></svg>
<div class="b" style="left:257px;top:453px;width:1623px;height:1px;background:#e3e7eb"></div>
<div class="b" style="left:289px;top:416px;width:16px;height:16px;border:1px solid #dee2e6;border-radius:4px"></div>
<div class="t" style="left:465.80px;top:407.69px;font-size:13.60px;color:#212529;letter-spacing:-0.136px;">I-9</div>
<div class="t" style="left:465.80px;top:428.69px;font-size:13.60px;color:#8b9299;letter-spacing:-0.008px;">HUM06-01</div>
<div class="t" style="left:601.80px;top:418.79px;font-size:13.60px;color:#1553a0;letter-spacing:-0.005px;">Delaney I-9</div>
<div class="t" style="left:801.30px;top:418.79px;font-size:13.60px;color:#212529;letter-spacing:-0.184px;">SharePoint O...</div>
<div class="t" style="left:912.00px;top:418.79px;font-size:13.60px;color:#212529;">2</div>
<div class="t" style="left:1002.20px;top:418.79px;font-size:13.60px;color:#212529;letter-spacing:-0.123px;">Dispose and ...</div>
<div class="t" style="left:1111.90px;top:418.79px;font-size:13.60px;color:#212529;letter-spacing:0.248px;">09/03/2020</div>
<div class="t" style="left:1262.00px;top:418.79px;font-size:13.60px;color:#212529;letter-spacing:-0.217px;">Personnel Files</div>
<div class="b" style="left:1808px;top:409px;width:54px;height:31px;background:#fff;border:1px solid #6c757d;border-radius:5px"></div>
<div class="b" style="left:1837px;top:410px;width:1px;height:29px;background:#6c757d"></div>
<svg style="left:1817px;top:422.5px" width="12" height="4" viewBox="0 0 12 4"><circle cx="1.7" cy="2" r="1.5" fill="#0b1a33"/><circle cx="6.1" cy="2" r="1.5" fill="#0b1a33"/><circle cx="10.5" cy="2" r="1.5" fill="#0b1a33"/></svg>
<svg style="left:1846.5px;top:421.5px" width="8" height="6" viewBox="0 0 8 6"><path d="M0 0h8L4 6z" fill="#0b1a33"/></svg>
<div class="b" style="left:257px;top:512px;width:1623px;height:1px;background:#e3e7eb"></div>
<div class="b" style="left:289px;top:475px;width:16px;height:16px;border:1px solid #dee2e6;border-radius:4px"></div>
<svg style="left:390px;top:478px" width="14" height="11" viewBox="0 0 14 11"><path d="M1 5.6l4 4 8-8.4" fill="none" stroke="#2f353b" stroke-width="1.05"/></svg>
<div class="b" style="left:457px;top:463px;width:137px;height:20px;overflow:hidden">
<div class="t" style="left:8.80px;top:3.69px;font-size:13.60px;color:#212529;letter-spacing:0.170px;">Training and Develop</div>
</div>
<div class="t" style="left:465.80px;top:487.69px;font-size:13.60px;color:#8b9299;letter-spacing:0.025px;">HUM09</div>
<div class="t" style="left:601.80px;top:477.79px;font-size:13.60px;color:#1553a0;letter-spacing:0.041px;">10-MB-Test</div>
<div class="t" style="left:801.30px;top:477.79px;font-size:13.60px;color:#212529;letter-spacing:-0.184px;">SharePoint O...</div>
<div class="t" style="left:912.00px;top:477.79px;font-size:13.60px;color:#212529;">1</div>
<div class="t" style="left:1002.20px;top:477.79px;font-size:13.60px;color:#212529;letter-spacing:-0.123px;">Dispose and ...</div>
<div class="t" style="left:1111.90px;top:477.79px;font-size:13.60px;color:#212529;letter-spacing:0.248px;">04/27/2023</div>
<div class="t" style="left:1262.00px;top:477.79px;font-size:13.60px;color:#212529;letter-spacing:0.140px;">Documents</div>
<div class="b" style="left:1808px;top:468px;width:54px;height:31px;background:#fff;border:1px solid #6c757d;border-radius:5px"></div>
<div class="b" style="left:1837px;top:469px;width:1px;height:29px;background:#6c757d"></div>
<svg style="left:1817px;top:481.5px" width="12" height="4" viewBox="0 0 12 4"><circle cx="1.7" cy="2" r="1.5" fill="#0b1a33"/><circle cx="6.1" cy="2" r="1.5" fill="#0b1a33"/><circle cx="10.5" cy="2" r="1.5" fill="#0b1a33"/></svg>
<svg style="left:1846.5px;top:480.5px" width="8" height="6" viewBox="0 0 8 6"><path d="M0 0h8L4 6z" fill="#0b1a33"/></svg>
<div class="b" style="left:257px;top:571px;width:1623px;height:1px;background:#e3e7eb"></div>
<div class="b" style="left:289px;top:534px;width:16px;height:16px;border:1px solid #dee2e6;border-radius:4px"></div>
<svg style="left:390px;top:537px" width="14" height="11" viewBox="0 0 14 11"><path d="M1 5.6l4 4 8-8.4" fill="none" stroke="#2f353b" stroke-width="1.05"/></svg>
<div class="t" style="left:465.80px;top:525.69px;font-size:13.60px;color:#212529;letter-spacing:-0.350px;transform:scaleX(0.8783);transform-origin:0 0;">ROT</div>
<div class="t" style="left:465.80px;top:546.69px;font-size:13.60px;color:#8b9299;letter-spacing:-0.350px;transform:scaleX(0.8783);transform-origin:0 0;">ROT</div>
<div class="t" style="left:602.02px;top:536.79px;font-size:13.60px;color:#1553a0;letter-spacing:-0.350px;transform:scaleX(0.9898);transform-origin:0 0;">______conduent_approvers_...</div>
<div class="t" style="left:801.30px;top:536.79px;font-size:13.60px;color:#212529;">Box</div>
<div class="t" style="left:912.00px;top:536.79px;font-size:13.60px;color:#212529;">1</div>
<div class="t" style="left:1002.20px;top:536.79px;font-size:13.60px;color:#212529;letter-spacing:-0.123px;">Dispose and ...</div>
<div class="t" style="left:1111.90px;top:536.79px;font-size:13.60px;color:#212529;letter-spacing:0.248px;">05/21/2024</div>
<div class="t" style="left:1671.50px;top:536.79px;font-size:13.60px;color:#212529;letter-spacing:0.137px;">All Files/Conduent</div>
<div class="b" style="left:1808px;top:527px;width:54px;height:31px;background:#fff;border:1px solid #6c757d;border-radius:5px"></div>
<div class="b" style="left:1837px;top:528px;width:1px;height:29px;background:#6c757d"></div>
<svg style="left:1817px;top:540.5px" width="12" height="4" viewBox="0 0 12 4"><circle cx="1.7" cy="2" r="1.5" fill="#0b1a33"/><circle cx="6.1" cy="2" r="1.5" fill="#0b1a33"/><circle cx="10.5" cy="2" r="1.5" fill="#0b1a33"/></svg>
<svg style="left:1846.5px;top:539.5px" width="8" height="6" viewBox="0 0 8 6"><path d="M0 0h8L4 6z" fill="#0b1a33"/></svg>
<div class="b" style="left:257px;top:630px;width:1623px;height:1px;background:#e3e7eb"></div>
<div class="b" style="left:289px;top:593px;width:16px;height:16px;border:1px solid #dee2e6;border-radius:4px"></div>
<svg style="left:390px;top:596px" width="14" height="11" viewBox="0 0 14 11"><path d="M1 5.6l4 4 8-8.4" fill="none" stroke="#2f353b" stroke-width="1.05"/></svg>
<div class="t" style="left:465.80px;top:584.69px;font-size:13.60px;color:#212529;letter-spacing:-0.350px;transform:scaleX(0.8783);transform-origin:0 0;">ROT</div>
<div class="t" style="left:465.80px;top:605.69px;font-size:13.60px;color:#8b9299;letter-spacing:-0.350px;transform:scaleX(0.8783);transform-origin:0 0;">ROT</div>
<div class="t" style="left:601.80px;top:595.79px;font-size:13.60px;color:#1553a0;letter-spacing:-0.209px;">1_cim_gas_contract_type_cr...</div>
<div class="t" style="left:801.30px;top:595.79px;font-size:13.60px;color:#212529;">Box</div>
<div class="t" style="left:912.00px;top:595.79px;font-size:13.60px;color:#212529;">1</div>
<div class="t" style="left:1002.20px;top:595.79px;font-size:13.60px;color:#212529;letter-spacing:-0.123px;">Dispose and ...</div>
<div class="t" style="left:1111.90px;top:595.79px;font-size:13.60px;color:#212529;letter-spacing:0.248px;">05/21/2024</div>
<div class="t" style="left:1671.50px;top:595.79px;font-size:13.60px;color:#212529;letter-spacing:-0.006px;">All Files/Cimarex/...</div>
<div class="b" style="left:1808px;top:586px;width:54px;height:31px;background:#fff;border:1px solid #6c757d;border-radius:5px"></div>
<div class="b" style="left:1837px;top:587px;width:1px;height:29px;background:#6c757d"></div>
<svg style="left:1817px;top:599.5px" width="12" height="4" viewBox="0 0 12 4"><circle cx="1.7" cy="2" r="1.5" fill="#0b1a33"/><circle cx="6.1" cy="2" r="1.5" fill="#0b1a33"/><circle cx="10.5" cy="2" r="1.5" fill="#0b1a33"/></svg>
<svg style="left:1846.5px;top:598.5px" width="8" height="6" viewBox="0 0 8 6"><path d="M0 0h8L4 6z" fill="#0b1a33"/></svg>
<div class="b" style="left:257px;top:689px;width:1623px;height:1px;background:#e3e7eb"></div>
<div class="b" style="left:289px;top:652px;width:16px;height:16px;border:1px solid #dee2e6;border-radius:4px"></div>
<svg style="left:390px;top:655px" width="14" height="11" viewBox="0 0 14 11"><path d="M1 5.6l4 4 8-8.4" fill="none" stroke="#2f353b" stroke-width="1.05"/></svg>
<div class="t" style="left:465.80px;top:643.69px;font-size:13.60px;color:#212529;letter-spacing:-0.350px;transform:scaleX(0.8783);transform-origin:0 0;">ROT</div>
<div class="t" style="left:465.80px;top:664.69px;font-size:13.60px;color:#8b9299;letter-spacing:-0.350px;transform:scaleX(0.8783);transform-origin:0 0;">ROT</div>
<div class="t" style="left:601.80px;top:654.79px;font-size:13.60px;color:#1553a0;letter-spacing:-0.242px;">2_cim_gas_contract_tab_dis...</div>
<div class="t" style="left:801.30px;top:654.79px;font-size:13.60px;color:#212529;">Box</div>
<div class="t" style="left:912.00px;top:654.79px;font-size:13.60px;color:#212529;">1</div>
<div class="t" style="left:1002.20px;top:654.79px;font-size:13.60px;color:#212529;letter-spacing:-0.123px;">Dispose and ...</div>
<div class="t" style="left:1111.90px;top:654.79px;font-size:13.60px;color:#212529;letter-spacing:0.248px;">05/21/2024</div>
<div class="t" style="left:1671.50px;top:654.79px;font-size:13.60px;color:#212529;letter-spacing:-0.006px;">All Files/Cimarex/...</div>
<div class="b" style="left:1808px;top:645px;width:54px;height:31px;background:#fff;border:1px solid #6c757d;border-radius:5px"></div>
<div class="b" style="left:1837px;top:646px;width:1px;height:29px;background:#6c757d"></div>
<svg style="left:1817px;top:658.5px" width="12" height="4" viewBox="0 0 12 4"><circle cx="1.7" cy="2" r="1.5" fill="#0b1a33"/><circle cx="6.1" cy="2" r="1.5" fill="#0b1a33"/><circle cx="10.5" cy="2" r="1.5" fill="#0b1a33"/></svg>
<svg style="left:1846.5px;top:657.5px" width="8" height="6" viewBox="0 0 8 6"><path d="M0 0h8L4 6z" fill="#0b1a33"/></svg>
<div class="b" style="left:257px;top:748px;width:1623px;height:1px;background:#e3e7eb"></div>
<div class="b" style="left:289px;top:711px;width:16px;height:16px;border:1px solid #dee2e6;border-radius:4px"></div>
<div class="t" style="left:465.80px;top:702.69px;font-size:13.60px;color:#212529;letter-spacing:-0.350px;transform:scaleX(0.8783);transform-origin:0 0;">ROT</div>
<div class="t" style="left:465.80px;top:723.69px;font-size:13.60px;color:#8b9299;letter-spacing:-0.350px;transform:scaleX(0.8783);transform-origin:0 0;">ROT</div>
<div class="t" style="left:601.80px;top:713.79px;font-size:13.60px;color:#1553a0;letter-spacing:-0.242px;">3_cim_gas_contract_tab_dis...</div>
<div class="t" style="left:801.30px;top:713.79px;font-size:13.60px;color:#212529;">Box</div>
<div class="t" style="left:912.00px;top:713.79px;font-size:13.60px;color:#212529;">1</div>
<div class="t" style="left:1002.20px;top:713.79px;font-size:13.60px;color:#212529;letter-spacing:-0.123px;">Dispose and ...</div>
<div class="t" style="left:1111.90px;top:713.79px;font-size:13.60px;color:#212529;letter-spacing:0.248px;">05/21/2024</div>
<div class="t" style="left:1671.50px;top:713.79px;font-size:13.60px;color:#212529;letter-spacing:-0.006px;">All Files/Cimarex/...</div>
<div class="b" style="left:1808px;top:704px;width:54px;height:31px;background:#fff;border:1px solid #6c757d;border-radius:5px"></div>
<div class="b" style="left:1837px;top:705px;width:1px;height:29px;background:#6c757d"></div>
<svg style="left:1817px;top:717.5px" width="12" height="4" viewBox="0 0 12 4"><circle cx="1.7" cy="2" r="1.5" fill="#0b1a33"/><circle cx="6.1" cy="2" r="1.5" fill="#0b1a33"/><circle cx="10.5" cy="2" r="1.5" fill="#0b1a33"/></svg>
<svg style="left:1846.5px;top:716.5px" width="8" height="6" viewBox="0 0 8 6"><path d="M0 0h8L4 6z" fill="#0b1a33"/></svg>
<div class="b" style="left:257px;top:807px;width:1623px;height:1px;background:#e3e7eb"></div>
<div class="b" style="left:289px;top:770px;width:16px;height:16px;border:1px solid #dee2e6;border-radius:4px"></div>
<div class="t" style="left:465.80px;top:761.69px;font-size:13.60px;color:#212529;letter-spacing:-0.350px;transform:scaleX(0.8783);transform-origin:0 0;">ROT</div>
<div class="t" style="left:465.80px;top:782.69px;font-size:13.60px;color:#8b9299;letter-spacing:-0.350px;transform:scaleX(0.8783);transform-origin:0 0;">ROT</div>
<div class="t" style="left:601.80px;top:772.79px;font-size:13.60px;color:#1553a0;letter-spacing:-0.242px;">4_cim_gas_contract_tab_dis...</div>
<div class="t" style="left:801.30px;top:772.79px;font-size:13.60px;color:#212529;">Box</div>
<div class="t" style="left:912.00px;top:772.79px;font-size:13.60px;color:#212529;">1</div>
<div class="t" style="left:1002.20px;top:772.79px;font-size:13.60px;color:#212529;letter-spacing:-0.123px;">Dispose and ...</div>
<div class="t" style="left:1111.90px;top:772.79px;font-size:13.60px;color:#212529;letter-spacing:0.248px;">05/21/2024</div>
<div class="t" style="left:1671.50px;top:772.79px;font-size:13.60px;color:#212529;letter-spacing:-0.006px;">All Files/Cimarex/...</div>
<div class="b" style="left:1808px;top:763px;width:54px;height:31px;background:#fff;border:1px solid #6c757d;border-radius:5px"></div>
<div class="b" style="left:1837px;top:764px;width:1px;height:29px;background:#6c757d"></div>
<svg style="left:1817px;top:776.5px" width="12" height="4" viewBox="0 0 12 4"><circle cx="1.7" cy="2" r="1.5" fill="#0b1a33"/><circle cx="6.1" cy="2" r="1.5" fill="#0b1a33"/><circle cx="10.5" cy="2" r="1.5" fill="#0b1a33"/></svg>
<svg style="left:1846.5px;top:775.5px" width="8" height="6" viewBox="0 0 8 6"><path d="M0 0h8L4 6z" fill="#0b1a33"/></svg>
<div class="b" style="left:289px;top:829px;width:16px;height:16px;border:1px solid #dee2e6;border-radius:4px"></div>
<div class="t" style="left:465.80px;top:820.69px;font-size:13.60px;color:#212529;letter-spacing:-0.350px;transform:scaleX(0.8783);transform-origin:0 0;">ROT</div>
<div class="t" style="left:465.80px;top:841.69px;font-size:13.60px;color:#8b9299;letter-spacing:-0.350px;transform:scaleX(0.8783);transform-origin:0 0;">ROT</div>
<div class="b" style="left:1808px;top:822px;width:54px;height:31px;background:#fff;border:1px solid #6c757d;border-radius:5px"></div>
<div class="b" style="left:1837px;top:823px;width:1px;height:29px;background:#6c757d"></div>
<svg style="left:1817px;top:835.5px" width="12" height="4" viewBox="0 0 12 4"><circle cx="1.7" cy="2" r="1.5" fill="#0b1a33"/><circle cx="6.1" cy="2" r="1.5" fill="#0b1a33"/><circle cx="10.5" cy="2" r="1.5" fill="#0b1a33"/></svg>
<svg style="left:1846.5px;top:834.5px" width="8" height="6" viewBox="0 0 8 6"><path d="M0 0h8L4 6z" fill="#0b1a33"/></svg>
<div class="b" style="left:1880px;top:277px;width:15px;height:548px;background:#fafafa"></div>
<svg style="left:1882px;top:285px" width="10" height="7" viewBox="0 0 10 7"><path d="M5 0.5L9.5 6.5H0.5z" fill="#8f8f8f"/></svg>
<div class="b" style="left:1883px;top:300px;width:9px;height:93px;background:#8f8f8f;border-radius:5px"></div>
<svg style="left:1882px;top:810px" width="10" height="7" viewBox="0 0 10 7"><path d="M0.5 0.5h9L5 6.5z" fill="#8f8f8f"/></svg>
<div class="b" style="left:256px;top:825px;width:1640px;height:53px;background:#e9ecef;border:1px solid #e1e5ea;border-top:0"></div>
<div class="b" style="left:265px;top:836px;width:202px;height:31px;background:#fff;border:1px solid #dfe3e8;border-radius:5px"></div>
<div class="b" style="left:266px;top:837px;width:75px;height:29px;background:#f1f3f5;border-radius:4px 0 0 4px"></div>
<div class="b" style="left:303px;top:837px;width:1px;height:29px;background:#e3e6ea"></div>
<div class="b" style="left:390px;top:837px;width:1px;height:29px;background:#e3e6ea"></div>
<div class="b" style="left:428px;top:837px;width:1px;height:29px;background:#e3e6ea"></div>
<div class="b" style="left:341px;top:836px;width:26px;height:31px;background:#004c9b"></div>
<div class="t" style="left:349.00px;top:845.15px;font-size:14.00px;color:#fff;">1</div>
<div class="t" style="left:374.00px;top:845.15px;font-size:14.00px;color:#1553a0;">2</div>
<svg style="left:279.5px;top:847px" width="9" height="10" viewBox="0 0 9 10"><path d="M0.5 0.5h1.8v9H0.5z M8.5 0.5v9L2.5 5z" fill="#979da4"/></svg>
<svg style="left:319px;top:848px" width="7" height="9" viewBox="0 0 7 9"><path d="M6.5 0.5v8L0.8 4.5z" fill="#979da4"/></svg>
<svg style="left:406px;top:848px" width="7" height="9" viewBox="0 0 7 9"><path d="M0.5 0.5v8L6.2 4.5z" fill="#0b1a33"/></svg>
<svg style="left:443px;top:847px" width="9" height="10" viewBox="0 0 9 10"><path d="M0.5 0.5v9L6.5 5z M6.7 0.5h1.8v9H6.7z" fill="#0b1a33"/></svg>
<div class="b" style="left:485px;top:836px;width:72px;height:31px;background:#fff;border:1px solid #e3e6ea;border-radius:5px"></div>
<div class="t" style="left:493.60px;top:845.15px;font-size:14.00px;color:#212529;">50</div>
<svg style="left:537px;top:849px" width="9" height="6" viewBox="0 0 9 6"><path d="M0 0h9L4.5 6z" fill="#0b1a33"/></svg>
<div class="t" style="left:564.90px;top:845.50px;font-size:13.00px;color:#212529;letter-spacing:-0.350px;transform:scaleX(0.9884);transform-origin:0 0;">items per page</div>
<div class="t" style="left:1741.60px;top:845.20px;font-size:13.00px;color:#212529;letter-spacing:-0.350px;">1 - 50 of 62 items</div>
<svg style="left:1861px;top:843px" width="17" height="18" viewBox="0 0 17 18"><path d="M8.6 3.7A6.2 6.2 0 1 0 13.15 5.9" fill="none" stroke="#0b1a33" stroke-width="1.9"/><path d="M8.2 0.5L13.2 3.7 8.2 6.9z" fill="#0b1a33"/></svg>
<div class="t" style="left:983.60px;top:901.44px;font-size:12.00px;color:#fff;letter-spacing:-0.122px;">© 2025 - Gimmal Records - </div>
<div class="t" style="left:1131.50px;top:901.44px;font-size:12.00px;color:#fff;letter-spacing:-0.307px;text-decoration:underline">Privacy</div>
<svg style="left:0;top:0" width="1912" height="920" viewBox="0 0 1912 920"><path d="M0 0h8A8 8 0 0 0 0 8z M1912 0h-8A8 8 0 0 1 1912 8z M0 920h8A8 8 0 0 1 0 912z M1912 920h-8A8 8 0 0 0 1912 912z" fill="#2e2e2e"/></svg>
</body></html>
